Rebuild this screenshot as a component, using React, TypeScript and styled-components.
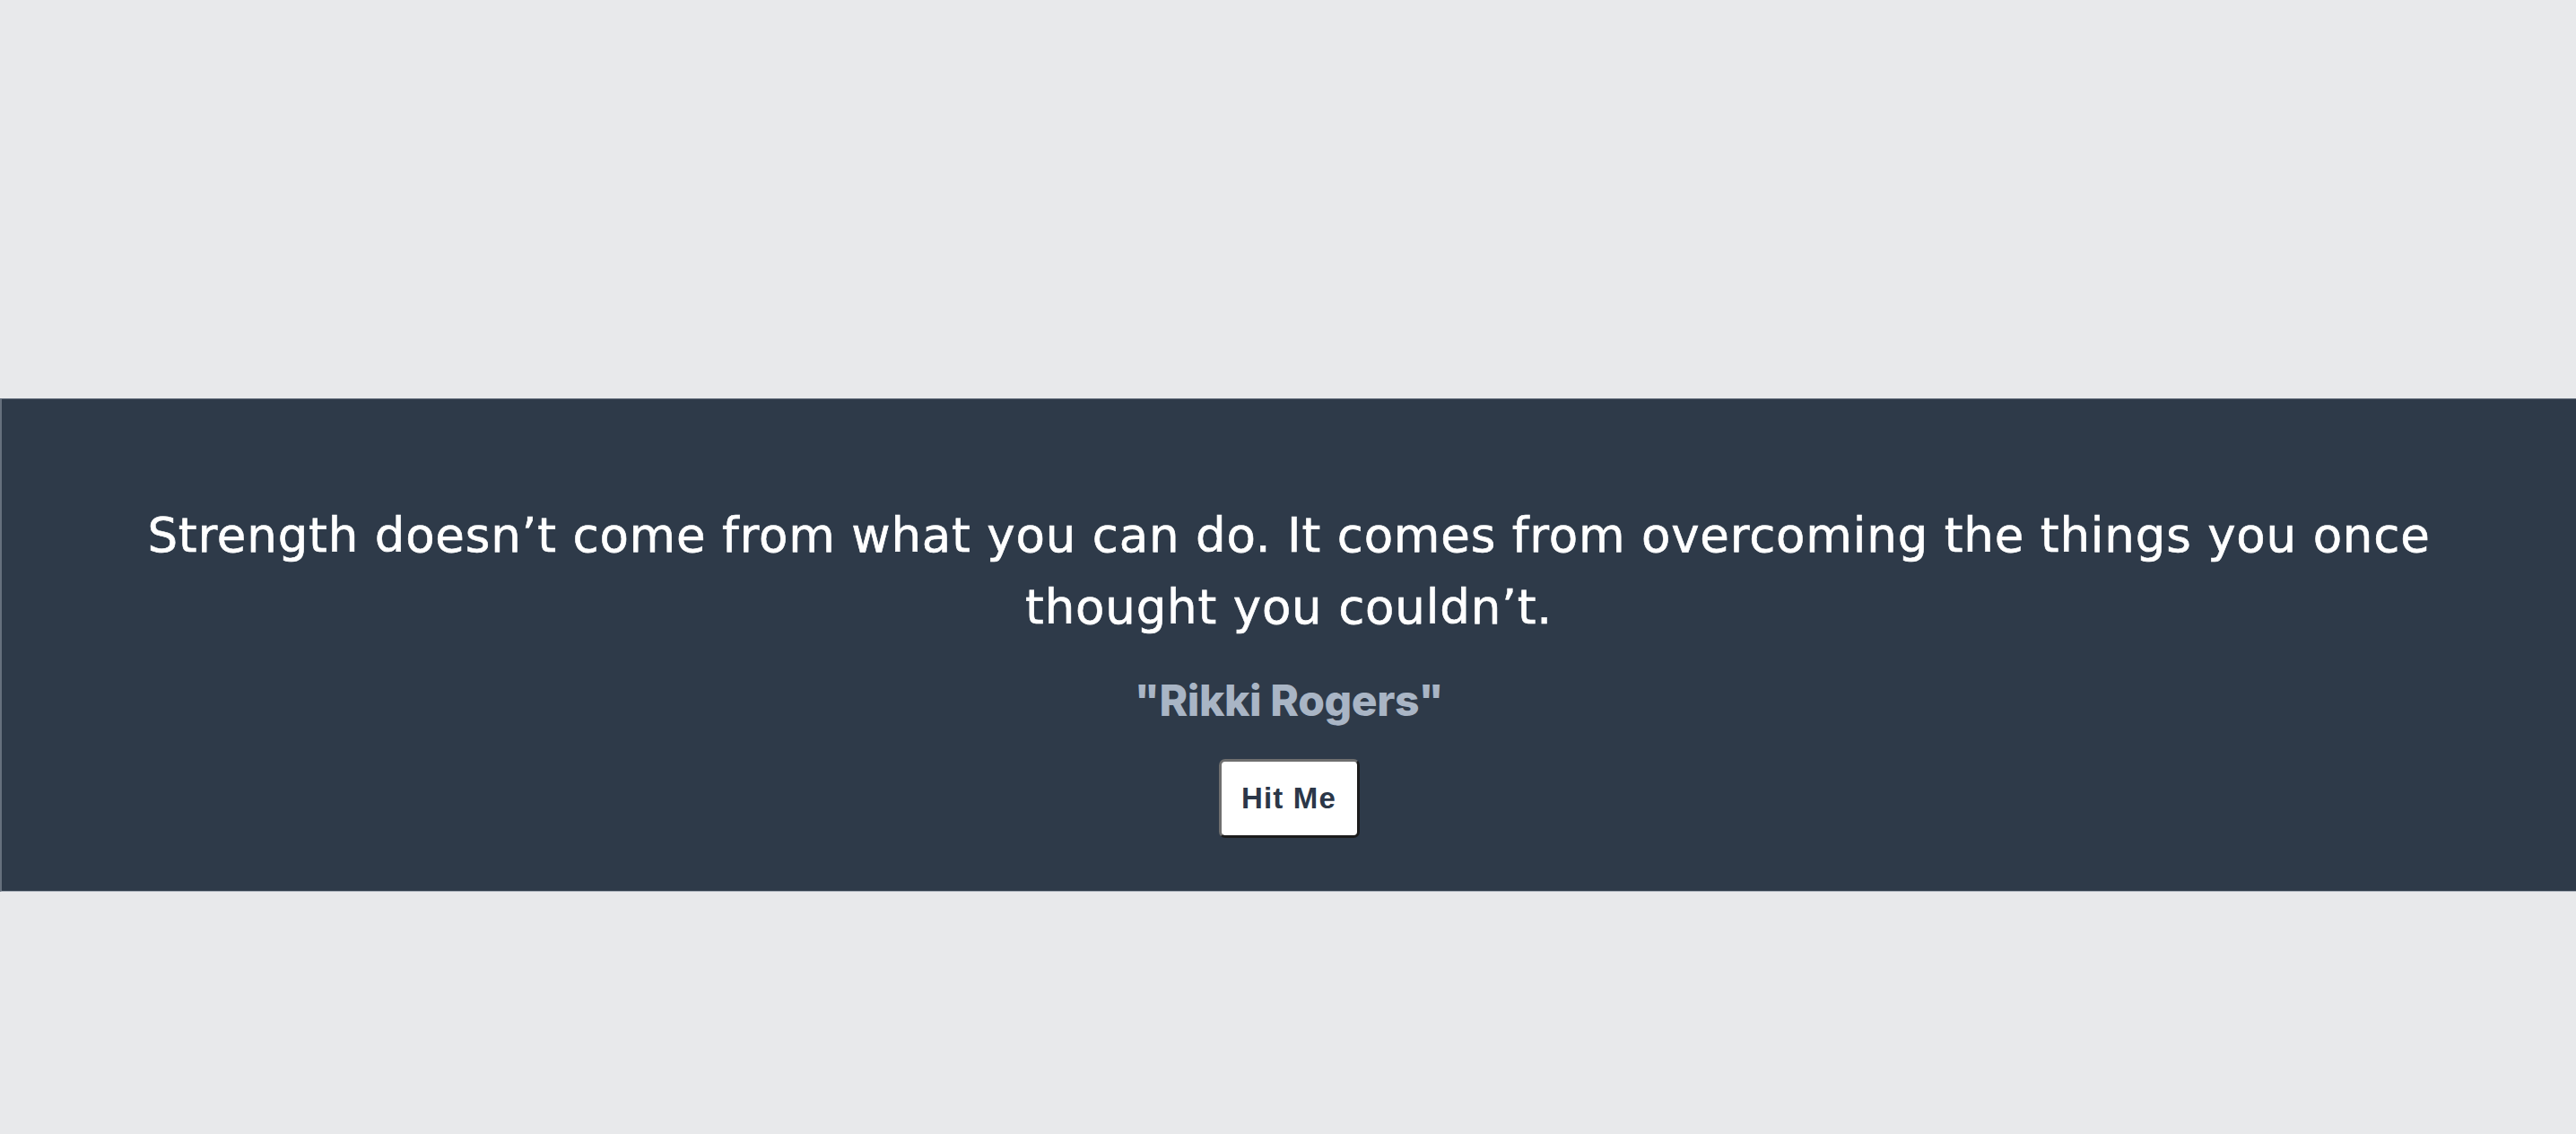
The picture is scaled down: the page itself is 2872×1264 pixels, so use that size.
import React, { useState } from "react";
import styled, { createGlobalStyle } from "styled-components";

const quotes = [
  {
    text: "Strength doesn’t come from what you can do. It comes from overcoming the things you once thought you couldn’t.",
    author: "Rikki Rogers",
  },
  {
    text: "The only way to do great work is to love what you do.",
    author: "Steve Jobs",
  },
  {
    text: "It always seems impossible until it’s done.",
    author: "Nelson Mandela",
  },
];

const GlobalStyle = createGlobalStyle`
  html, body {
    margin: 0;
    padding: 0;
    background: #e8e9eb;
  }
  * {
    box-sizing: border-box;
  }
`;

const StyledPage = styled.div`
  min-height: 1264px;
  padding-top: 444px;
  background: #e8e9eb;
  font-family: Inter, "Noto Sans", sans-serif;
`;

const StyledBand = styled.section`
  display: flex;
  flex-direction: column;
  align-items: center;
  width: 100%;
  padding: 112px 110px 59px;
  background: #2e3a49;
  border-top: 1px solid #66707d;
  border-left: 2px solid #66707d;
  border-bottom: 1px solid #a6aeb8;
`;

const StyledQuote = styled.p`
  margin: 0;
  font-family: "DejaVu Sans", Inter, sans-serif;
  font-size: 53px;
  font-weight: 400;
  line-height: 80px;
  letter-spacing: 0.8px;
  color: #ffffff;
  text-align: center;
  -webkit-text-stroke: 0.6px #ffffff;
`;

const StyledAuthor = styled.h2`
  margin: 32px 0 0;
  font-size: 48px;
  font-weight: 800;
  line-height: 64px;
  color: #a9b5c5;
  letter-spacing: -0.4px;
`;

const StyledButton = styled.button`
  margin-top: 33px;
  width: 157px;
  height: 88px;
  padding: 0;
  font-family: "Liberation Sans", Arial, sans-serif;
  font-size: 33px;
  font-weight: 700;
  letter-spacing: 1.2px;
  color: #2b3748;
  background: #ffffff;
  border: 3px solid;
  border-color: #6f6f6f #1c1c1c #1c1c1c #6f6f6f;
  border-radius: 7px;
  cursor: pointer;
`;

function App() {
  const [index, setIndex] = useState(0);
  const quote = quotes[index];

  const handleNext = () => {
    setIndex((index + 1) % quotes.length);
  };

  return (
    <StyledPage>
      <GlobalStyle />
      <StyledBand>
        <StyledQuote>{quote.text}</StyledQuote>
        <StyledAuthor>"{quote.author}"</StyledAuthor>
        <StyledButton onClick={handleNext}>Hit Me</StyledButton>
      </StyledBand>
    </StyledPage>
  );
}

export default App;
